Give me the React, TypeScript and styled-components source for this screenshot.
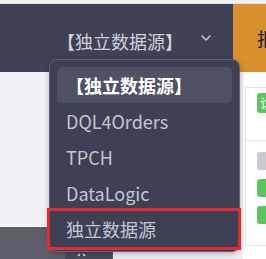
import styled, { createGlobalStyle } from "styled-components";

const GlobalStyle = createGlobalStyle`
  html, body {
    margin: 0;
    padding: 0;
    background: #f4f4f6;
  }
  * {
    box-sizing: border-box;
  }
`;

const Page = styled.div`
  position: relative;
  width: 266px;
  height: 259px;
  overflow: hidden;
  display: flex;
  flex-direction: column;
  font-family: "Noto Sans CJK SC", "Noto Sans", sans-serif;
`;

const TopStrip = styled.div`
  height: 4px;
  flex-shrink: 0;
  background: #f2f2f5;
  border-bottom: 1px solid #e2e3e8;
`;

const Header = styled.div`
  height: 68px;
  flex-shrink: 0;
  display: flex;
  justify-content: flex-end;
  align-items: center;
  background: #3f4257;
`;

const Title = styled.span`
  font-size: 18px;
  color: #cfd1d9;
  padding-top: 6px;
  white-space: nowrap;
`;

const Chevron = styled.svg`
  margin: 0 22px 0 18px;
  flex-shrink: 0;
`;

const OrangeTab = styled.div`
  width: 33px;
  height: 100%;
  flex-shrink: 0;
  overflow: hidden;
  background: #d8912d;
  display: flex;
  align-items: center;
  padding-left: 24px;
  font-size: 18px;
  color: #1a1a1a;
  white-space: nowrap;
`;

const Main = styled.div`
  flex: 1;
  display: flex;
`;

const LeftPanel = styled.div`
  width: 243px;
  flex-shrink: 0;
  display: flex;
  flex-direction: column;
  background: #eef0f5;
`;

const LeftBody = styled.div`
  flex: 1;
`;

const BottomBar = styled.div`
  width: 113px;
  height: 33px;
  display: flex;
  align-items: flex-end;
  padding-left: 65px;
  background: #5c5f6b;
  border-top: 1px solid #ffffff;
`;

const DarkTab = styled.div`
  width: 47px;
  height: 9px;
  background: #4a4d59;
  display: flex;
  justify-content: center;
  padding-top: 3px;
  padding-right: 14px;
`;

const RightPanel = styled.div`
  flex: 1;
  background: #ffffff;
  padding-top: 15px;
  padding-left: 2px;
`;

const Table = styled.div`
  border-left: 1px solid #e3e5ea;
  border-top: 1px solid #e3e5ea;
`;

const Row = styled.div<{ $h: number }>`
  height: ${(p) => p.$h}px;
  border-bottom: 1px solid #e3e5ea;
  display: flex;
  flex-direction: column;
  gap: 9px;
  padding: 5px 0 0 11px;
`;

const Badge = styled.div<{ $color: string; $h: number }>`
  width: 26px;
  height: ${(p) => p.$h}px;
  border-radius: 3px;
  background: ${(p) => p.$color};
  color: #ffffff;
  font-size: 13px;
  line-height: ${(p) => p.$h}px;
  padding-left: 3px;
  overflow: hidden;
  white-space: nowrap;
`;

const Dropdown = styled.div`
  position: absolute;
  left: 49px;
  top: 59px;
  width: 191px;
  height: 193px;
  padding: 7px 7px 6px 7px;
  background: #3e4155;
  border: 1.5px solid #606377;
  border-radius: 8px;
  box-shadow: 0 2px 6px rgba(0, 0, 0, 0.25);
`;

const Item = styled.div<{ $active?: boolean; $marked?: boolean }>`
  position: relative;
  height: 36px;
  display: flex;
  align-items: center;
  padding-left: 9px;
  font-size: 18px;
  white-space: nowrap;
  border-radius: 5px;
  color: ${(p) => (p.$active ? "#ffffff" : "#c3c6d0")};
  font-weight: ${(p) => (p.$active ? 700 : 400)};
  background: ${(p) => (p.$active ? "#4f5165" : "transparent")};

  ${(p) =>
    p.$marked &&
    `
    &::after {
      content: "";
      position: absolute;
      left: -10px;
      right: -9px;
      top: -3px;
      bottom: -3px;
      border: 3px solid #e8282c;
    }
  `}
`;

const items = ["DQL4Orders", "TPCH", "DataLogic"];

export default function App() {
  return (
    <>
      <GlobalStyle />
      <Page>
        <TopStrip />
        <Header>
          <Title>【独立数据源】</Title>
          <Chevron width="10" height="6" viewBox="0 0 10 6">
            <polyline
              points="1,1 5,5 9,1"
              fill="none"
              stroke="#c8cad3"
              strokeWidth="1.5"
              strokeLinecap="round"
              strokeLinejoin="round"
            />
          </Chevron>
          <OrangeTab>报表</OrangeTab>
        </Header>
        <Main>
          <LeftPanel>
            <LeftBody />
            <BottomBar>
              <DarkTab>
                <svg width="9" height="4" viewBox="0 0 9 4">
                  <path d="M1 3 L3 1 M6 1 L8 3" stroke="#ffffff" strokeWidth="1.2" />
                </svg>
              </DarkTab>
            </BottomBar>
          </LeftPanel>
          <RightPanel>
            <Table>
              <Row $h={53}>
                <Badge $color="#5cc460" $h={20}>诊断</Badge>
              </Row>
              <Row $h={105} style={{ paddingTop: 11 }}>
                <Badge $color="#c9cacf" $h={18} />
                <Badge $color="#5cc460" $h={18} />
                <Badge $color="#5cc460" $h={18} />
              </Row>
            </Table>
          </RightPanel>
        </Main>
        <Dropdown>
          <Item $active>【独立数据源】</Item>
          {items.map((name) => (
            <Item key={name}>{name}</Item>
          ))}
          <Item $marked>独立数据源</Item>
        </Dropdown>
      </Page>
    </>
  );
}
